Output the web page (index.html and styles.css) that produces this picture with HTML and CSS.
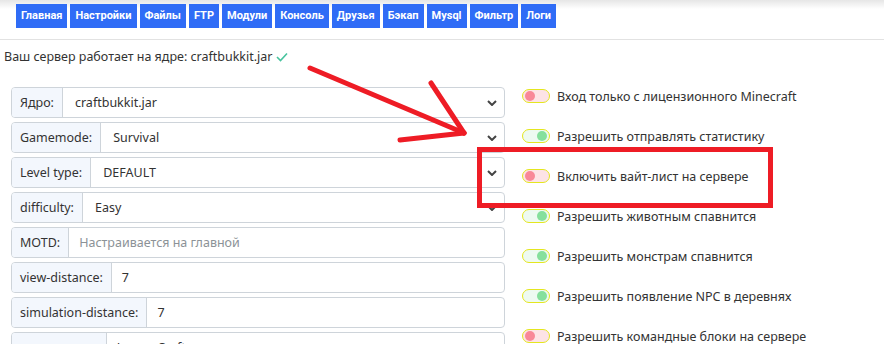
FILE: index.html
```html
<html>
<head>
    <meta charset="UTF-8" />
    <link rel="stylesheet" href="styles.css">
</head>
<body>

  <div class="topbar">
      <nav class="menu">
          <a class="menu-btn">Главная</a>
          <a class="menu-btn">Настройки</a>
          <a class="menu-btn">Файлы</a>
          <a class="menu-btn">FTP</a>
          <a class="menu-btn">Модули</a>
          <a class="menu-btn">Консоль</a>
          <a class="menu-btn">Друзья</a>
          <a class="menu-btn">Бэкап</a>
          <a class="menu-btn">Mysql</a>
          <a class="menu-btn">Фильтр</a>
          <a class="menu-btn">Логи</a>
      </nav>
  </div>

  <p class="status">Ваш сервер работает на ядре: craftbukkit.jar
      <svg class="ok" width="12" height="10" viewBox="0 0 12 10"><polyline points="1,5 4.5,8.5 11,1.5" /></svg>
  </p>

  <div class="settings">
      <div class="fields">
          <div class="field">
              <span class="field-label">Ядро:</span>
              <div class="field-value select">craftbukkit.jar <svg class="chev" viewBox="0 0 10 6"><polyline points="1,1 5,5 9,1" /></svg></div>
          </div>
          <div class="field">
              <span class="field-label">Gamemode:</span>
              <div class="field-value select">Survival <svg class="chev" viewBox="0 0 10 6"><polyline points="1,1 5,5 9,1" /></svg></div>
          </div>
          <div class="field">
              <span class="field-label">Level type:</span>
              <div class="field-value select">DEFAULT <svg class="chev" viewBox="0 0 10 6"><polyline points="1,1 5,5 9,1" /></svg></div>
          </div>
          <div class="field">
              <span class="field-label">difficulty:</span>
              <div class="field-value select">Easy <svg class="chev" viewBox="0 0 10 6"><polyline points="1,1 5,5 9,1" /></svg></div>
          </div>
          <div class="field">
              <span class="field-label">MOTD:</span>
              <div class="field-value placeholder">Настраивается на главной</div>
          </div>
          <div class="field">
              <span class="field-label">view-distance:</span>
              <div class="field-value">7</div>
          </div>
          <div class="field">
              <span class="field-label">simulation-distance:</span>
              <div class="field-value">7</div>
          </div>
          <div class="field">
              <span class="field-label">server-name:</span>
              <div class="field-value">LemonCraft</div>
          </div>
      </div>

      <ul class="switches">
          <li><span class="switch"></span> Вход только с лицензионного Minecraft</li>
          <li><span class="switch on"></span> Разрешить отправлять статистику</li>
          <li><span class="switch"></span> Включить вайт-лист на сервере</li>
          <li><span class="switch on"></span> Разрешить животным спавнится</li>
          <li><span class="switch on"></span> Разрешить монстрам спавнится</li>
          <li><span class="switch on"></span> Разрешить появление NPC в деревнях</li>
          <li><span class="switch"></span> Разрешить командные блоки на сервере</li>
      </ul>
  </div>

  <!-- пометки поверх скриншота -->
  <svg class="marks" width="884" height="344">
      <line x1="310" y1="68" x2="464" y2="133" />
      <line x1="431" y1="83" x2="464" y2="133" />
      <line x1="400" y1="140" x2="464" y2="133" />
      <rect x="479.5" y="149.5" width="291" height="56" />
  </svg>

</body>
</html>
```

FILE: styles.css
```css
html, body {
    overflow: hidden;
}

body {
    margin: 0;
    font-family: "Noto Sans", sans-serif;
    font-size: 12.5px;
    color: #333;
    background: #fff;
}

.topbar {
    background: linear-gradient(#e6e6e6, #fff 9px);
    border-bottom: 1px solid #e2e2e2;
    height: 40px;
    box-sizing: border-box;
    padding: 4px 0 0 16px;
}

.menu {
    display: flex;
    gap: 3px;
}

.menu-btn {
    display: block;
    background: #2f6cf6;
    color: #fff;
    font-family: Roboto, sans-serif;
    font-weight: bold;
    font-size: 11px;
    line-height: 24px;
    padding: 0 5px;
    text-decoration: none;
}

.status {
    margin: 0;
    padding: 9px 0 0 4px;
    height: 38px;
    box-sizing: border-box;
    line-height: 16px;
}

.ok {
    vertical-align: -1px;
}

.ok polyline {
    fill: none;
    stroke: #47c39e;
    stroke-width: 1.6;
}

.settings {
    display: flex;
    gap: 17px;
    padding-left: 11px;
    margin-top: 9px;
}

.fields {
    width: 494px;
    display: flex;
    flex-direction: column;
    gap: 4px;
}

.field {
    display: flex;
    height: 31px;
    box-sizing: border-box;
    border: 1px solid #ced4da;
    border-radius: 4px;
    overflow: hidden;
}

.field-label {
    display: flex;
    align-items: center;
    padding: 0 8px;
    background: #f3f7fd;
    border-right: 1px solid #ced4da;
}

.field-value {
    flex: 1;
    display: flex;
    align-items: center;
    padding: 0 10px;
}

.field-value.select {
    padding-left: 12px;
}

.field-value.placeholder {
    color: #8c9297;
}

.chev {
    width: 10px;
    height: 6px;
    margin-left: auto;
    margin-right: -3px;
}

.chev polyline {
    fill: none;
    stroke: #444;
    stroke-width: 2;
}

.switches {
    list-style: none;
    margin: 0;
    padding: 1px 0 0 0;
    display: flex;
    flex-direction: column;
    gap: 24px;
}

.switches li {
    display: flex;
    align-items: center;
    gap: 7px;
    height: 16px;
}

.switch {
    width: 26px;
    height: 12px;
    border: 1.5px solid #e4e61f;
    border-radius: 8px;
    background: #fde3e6;
    position: relative;
}

.switch:before {
    content: '';
    position: absolute;
    left: 2px;
    top: 1px;
    width: 10px;
    height: 10px;
    border-radius: 50%;
    background: #f98898;
}

.switch.on {
    background: #eefaf1;
}

.switch.on:before {
    left: 14px;
    background: #86e09c;
}

.marks {
    position: absolute;
    top: 0;
    left: 0;
}

.marks line {
    stroke: #ee1c25;
    stroke-width: 5;
    stroke-linecap: round;
}

.marks rect {
    fill: none;
    stroke: #ee1c25;
    stroke-width: 5;
}
```
